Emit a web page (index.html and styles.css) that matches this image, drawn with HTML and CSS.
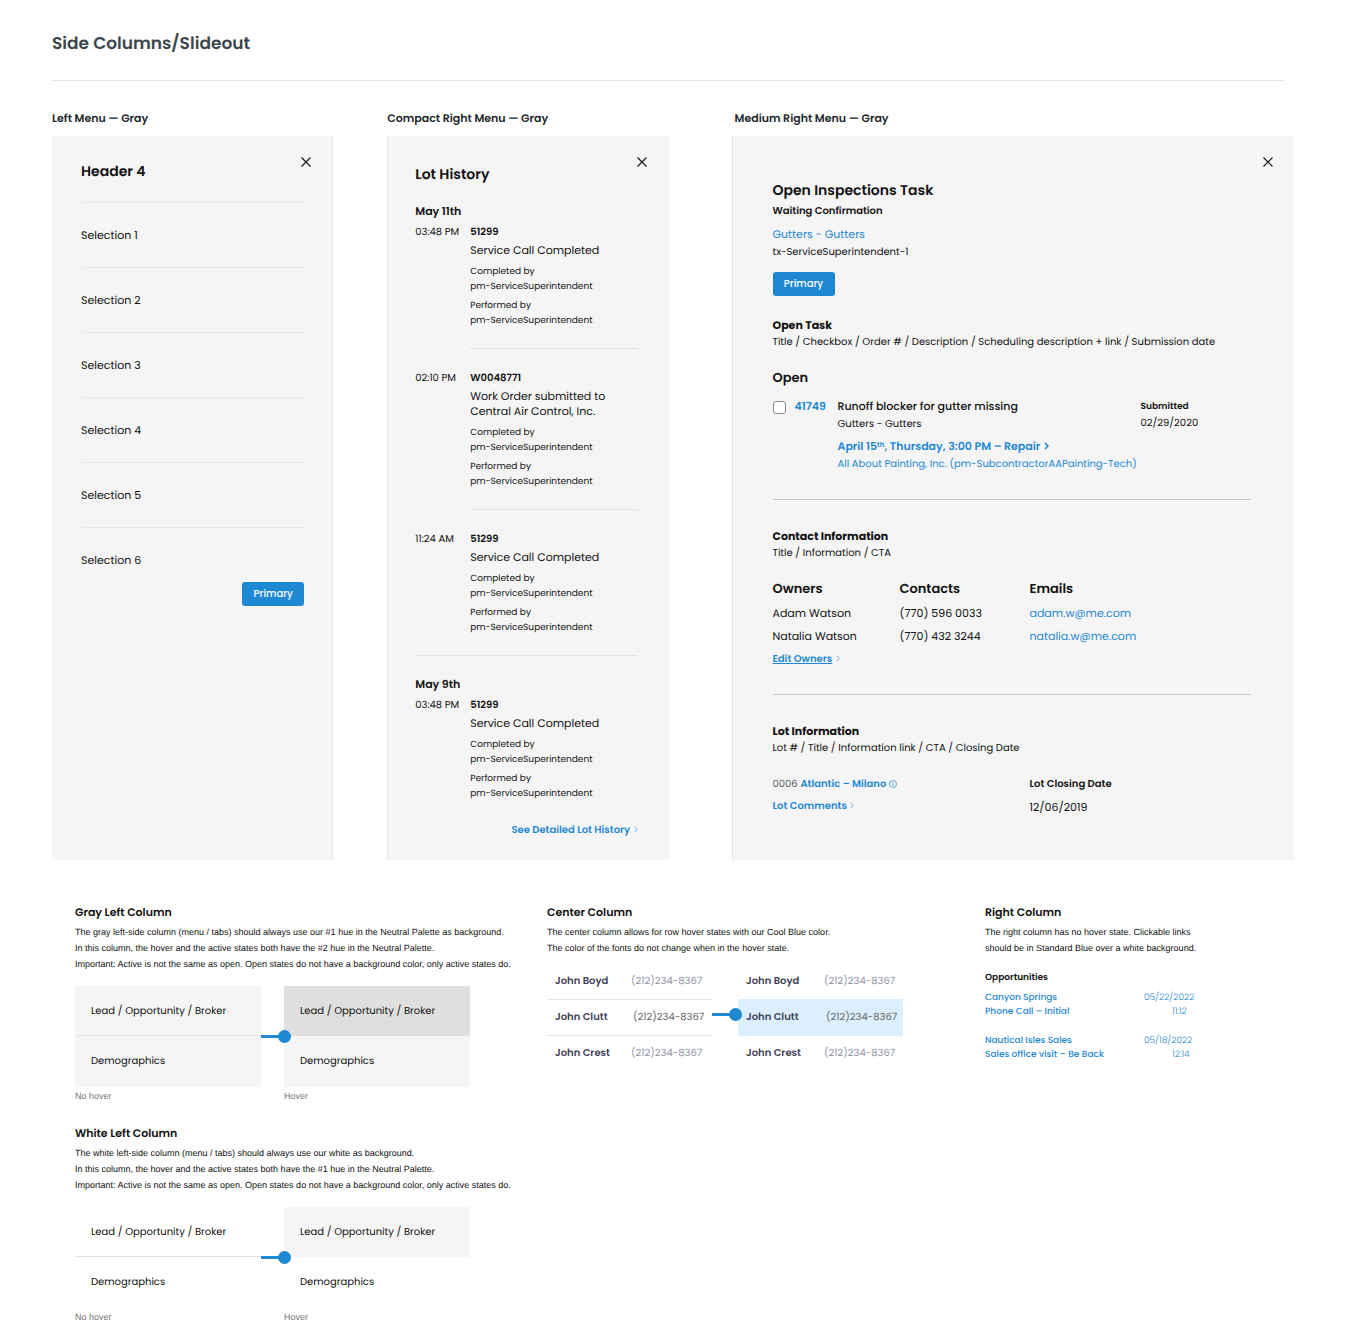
FILE: index.html
```html
<!DOCTYPE html>
<html lang="en">
<head>
    <meta charset="UTF-8">
    <meta name="viewport" content="width=device-width, initial-scale=1.0">
    <title>Side Columns/Slideout</title>
    <link rel="stylesheet" href="styles.css">
</head>
<body>
    <header class="page-header">
        <h1>Side Columns/Slideout</h1>
    </header>

    <main>
        <div class="panels">
            <!-- Left menu -->
            <section class="panel-col">
                <h2 class="panel-label">Left Menu — Gray</h2>
                <div class="panel panel-left">
                    <div class="panel-head">
                        <h3>Header 4</h3>
                        <button type="button" class="close" aria-label="Close">
                            <svg viewBox="0 0 12 12" width="12" height="12"><path d="M1.5 1.5l9 9M10.5 1.5l-9 9"/></svg>
                        </button>
                    </div>
                    <ul class="menu">
                        <li>Selection 1</li>
                        <li>Selection 2</li>
                        <li>Selection 3</li>
                        <li>Selection 4</li>
                        <li>Selection 5</li>
                        <li>Selection 6</li>
                    </ul>
                    <div class="actions">
                        <button type="button" class="btn">Primary</button>
                    </div>
                </div>
            </section>

            <!-- Compact right menu -->
            <section class="panel-col">
                <h2 class="panel-label">Compact Right Menu — Gray</h2>
                <div class="panel panel-compact">
                    <div class="panel-head">
                        <h3>Lot History</h3>
                        <button type="button" class="close" aria-label="Close">
                            <svg viewBox="0 0 12 12" width="12" height="12"><path d="M1.5 1.5l9 9M10.5 1.5l-9 9"/></svg>
                        </button>
                    </div>
                    <div class="day">
                        <h4>May 11th</h4>
                        <div class="entry">
                            <span class="time">03:48 PM</span>
                            <div class="entry-body">
                                <strong>51299</strong>
                                <p class="entry-title">Service Call Completed</p>
                                <p class="by">Completed by<br>pm-ServiceSuperintendent</p>
                                <p class="by">Performed by<br>pm-ServiceSuperintendent</p>
                            </div>
                        </div>
                        <div class="entry">
                            <span class="time">02:10 PM</span>
                            <div class="entry-body">
                                <strong>W0048771</strong>
                                <p class="entry-title">Work Order submitted to<br>Central Air Control, Inc.</p>
                                <p class="by">Completed by<br>pm-ServiceSuperintendent</p>
                                <p class="by">Performed by<br>pm-ServiceSuperintendent</p>
                            </div>
                        </div>
                        <div class="entry">
                            <span class="time">11:24 AM</span>
                            <div class="entry-body">
                                <strong>51299</strong>
                                <p class="entry-title">Service Call Completed</p>
                                <p class="by">Completed by<br>pm-ServiceSuperintendent</p>
                                <p class="by">Performed by<br>pm-ServiceSuperintendent</p>
                            </div>
                        </div>
                    </div>
                    <div class="day">
                        <h4>May 9th</h4>
                        <div class="entry">
                            <span class="time">03:48 PM</span>
                            <div class="entry-body">
                                <strong>51299</strong>
                                <p class="entry-title">Service Call Completed</p>
                                <p class="by">Completed by<br>pm-ServiceSuperintendent</p>
                                <p class="by">Performed by<br>pm-ServiceSuperintendent</p>
                            </div>
                        </div>
                    </div>
                    <p class="see-more">
                        <a href="#" class="link-strong">See Detailed Lot History <svg class="chevron" viewBox="0 0 4 7" width="4" height="7"><path d="M.7 .7l2.6 2.8L.7 6.3"/></svg></a>
                    </p>
                </div>
            </section>

            <!-- Medium right menu -->
            <section class="panel-col panel-col-wide">
                <h2 class="panel-label">Medium Right Menu — Gray</h2>
                <div class="panel panel-medium">
                    <div class="panel-head">
                        <h3>Open Inspections Task</h3>
                        <button type="button" class="close" aria-label="Close">
                            <svg viewBox="0 0 12 12" width="12" height="12"><path d="M1.5 1.5l9 9M10.5 1.5l-9 9"/></svg>
                        </button>
                    </div>
                    <div class="task-summary">
                        <strong>Waiting Confirmation</strong>
                        <a href="#" class="link">Gutters - Gutters</a>
                        <span class="assignee">tx-ServiceSuperintendent-1</span>
                        <button type="button" class="btn">Primary</button>
                    </div>

                    <div class="block">
                        <h4>Open Task</h4>
                        <p class="desc">Title / Checkbox / Order # / Description / Scheduling description + link / Submission date</p>
                        <h5>Open</h5>
                        <div class="task">
                            <input type="checkbox" id="task-41749">
                            <label for="task-41749" class="order">41749</label>
                            <div class="task-body">
                                <p class="task-title">Runoff blocker for gutter missing</p>
                                <p class="task-sub">Gutters - Gutters</p>
                                <a href="#" class="schedule">April 15<sup>th</sup>, Thursday, 3:00 PM – Repair <svg class="chevron chevron-bold" viewBox="0 0 5 8" width="5" height="8"><path d="M1 1l3 3-3 3"/></svg></a>
                                <a href="#" class="vendor">All About Painting, Inc. (pm-SubcontractorAAPainting-Tech)</a>
                            </div>
                            <div class="submitted">
                                <strong>Submitted</strong>
                                <span>02/29/2020</span>
                            </div>
                        </div>
                    </div>

                    <div class="block">
                        <h4>Contact Information</h4>
                        <p class="desc">Title / Information / CTA</p>
                        <table class="contacts">
                            <thead>
                                <tr><th>Owners</th><th>Contacts</th><th>Emails</th></tr>
                            </thead>
                            <tbody>
                                <tr><td>Adam Watson</td><td>(770) 596 0033</td><td><a href="#">adam.w@me.com</a></td></tr>
                                <tr><td>Natalia Watson</td><td>(770) 432 3244</td><td><a href="#">natalia.w@me.com</a></td></tr>
                            </tbody>
                        </table>
                        <a href="#" class="link-strong edit"><u>Edit Owners</u> <svg class="chevron" viewBox="0 0 4 7" width="4" height="7"><path d="M.7 .7l2.6 2.8L.7 6.3"/></svg></a>
                    </div>

                    <div class="block">
                        <h4>Lot Information</h4>
                        <p class="desc">Lot # / Title / Information link / CTA / Closing Date</p>
                        <div class="lot">
                            <div>
                                <p class="lot-name">0006 <a href="#" class="link-strong">Atlantic – Milano <svg class="info" viewBox="0 0 8 8" width="8" height="8"><circle cx="4" cy="4" r="3.5"/><path d="M4 1.8v.8M4 3.4v2.6"/></svg></a></p>
                                <a href="#" class="link-strong">Lot Comments <svg class="chevron" viewBox="0 0 4 7" width="4" height="7"><path d="M.7 .7l2.6 2.8L.7 6.3"/></svg></a>
                            </div>
                            <div>
                                <strong>Lot Closing Date</strong>
                                <p class="lot-date">12/06/2019</p>
                            </div>
                        </div>
                    </div>
                </div>
            </section>
        </div>

        <div class="columns">
            <div class="column-stack">
                <section class="column">
                    <h3>Gray Left Column</h3>
                    <p>The gray left-side column (menu / tabs) should always use our #1 hue in the Neutral Palette as background.</p>
                    <p>In this column, the hover and the active states both have the #2 hue in the Neutral Palette.</p>
                    <p>Important: Active is not the same as open. Open states do not have a background color, only active states do.</p>
                    <div class="states gray">
                        <div class="tabs">
                            <div class="tab">Lead / Opportunity / Broker</div>
                            <div class="tab">Demographics</div>
                        </div>
                        <span class="connector"></span>
                        <div class="tabs tabs-hover">
                            <div class="tab">Lead / Opportunity / Broker</div>
                            <div class="tab">Demographics</div>
                        </div>
                    </div>
                    <div class="captions"><span>No hover</span><span>Hover</span></div>
                </section>
                <section class="column">
                    <h3>White Left Column</h3>
                    <p>The white left-side column (menu / tabs) should always use our white as background.</p>
                    <p>In this column, the hover and the active states both have the #1 hue in the Neutral Palette.</p>
                    <p>Important: Active is not the same as open. Open states do not have a background color, only active states do.</p>
                    <div class="states white">
                        <div class="tabs">
                            <div class="tab">Lead / Opportunity / Broker</div>
                            <div class="tab">Demographics</div>
                        </div>
                        <span class="connector"></span>
                        <div class="tabs tabs-hover">
                            <div class="tab">Lead / Opportunity / Broker</div>
                            <div class="tab">Demographics</div>
                        </div>
                    </div>
                    <div class="captions"><span>No hover</span><span>Hover</span></div>
                </section>
            </div>

            <section class="column">
                <h3>Center Column</h3>
                <p>The center column allows for row hover states with our Cool Blue color.</p>
                <p>The color of the fonts do not change when in the hover state.</p>
                <div class="people-states">
                    <table class="people">
                        <tr><th>John Boyd</th><td>(212)234-8367</td></tr>
                        <tr class="current"><th>John Clutt</th><td>(212)234-8367</td></tr>
                        <tr><th>John Crest</th><td>(212)234-8367</td></tr>
                    </table>
                    <span class="connector"></span>
                    <table class="people people-hover">
                        <tr><th>John Boyd</th><td>(212)234-8367</td></tr>
                        <tr class="current"><th>John Clutt</th><td>(212)234-8367</td></tr>
                        <tr><th>John Crest</th><td>(212)234-8367</td></tr>
                    </table>
                </div>
            </section>

            <section class="column">
                <h3>Right Column</h3>
                <p>The right column has no hover state. Clickable links<br>should be in Standard Blue over a white background.</p>
                <h4>Opportunities</h4>
                <ul class="opportunities">
                    <li>
                        <a href="#">Canyon Springs<br>Phone Call – Initial</a>
                        <div><time>05/22/2022</time><time class="hour">11:12</time></div>
                    </li>
                    <li>
                        <a href="#">Nautical Isles Sales<br>Sales office visit – Be Back</a>
                        <div><time>05/18/2022</time><time class="hour">12:14</time></div>
                    </li>
                </ul>
            </section>
        </div>
    </main>
</body>
</html>
```
FILE: styles.css
```css
* {
    box-sizing: border-box;
}

body {
    font-family: 'Poppins', 'Inter', sans-serif;
    font-size: 11px;
    line-height: 16px;
    color: #111;
    background: #fff;
    text-rendering: geometricPrecision;
    margin: 0;
    padding: 31px 55px 18px 52px;
}

h1, h2, h3, h4, h5, p, ul {
    margin: 0;
    padding: 0;
}

ul {
    list-style: none;
}

strong, h1, h2, h3, h4, h5 {
    font-weight: 600;
}

a {
    color: #1e88d2;
    text-decoration: none;
}

button {
    font-family: inherit;
    border: none;
    cursor: pointer;
}

svg {
    fill: none;
    stroke: currentColor;
}

.page-header {
    border-bottom: 1px solid #e6e8e9;
    margin-right: 10px;
    padding-bottom: 25px;
}

.page-header h1 {
    font-size: 17px;
    line-height: 24px;
    color: #3d464b;
}

/* Panels */
.panels {
    display: flex;
    margin-top: 29px;
}

.panel-col {
    flex: 1 1 0;
    min-width: 0;
    display: flex;
    flex-direction: column;
}

.panel-col + .panel-col {
    margin-left: 54px;
}

.panel-col + .panel-col-wide {
    flex: 2 1 0;
    margin-left: 63px;
}

.panel-label {
    font-size: 11px;
    color: #22292d;
    margin-bottom: 10px;
}

.panel-col-wide .panel-label {
    padding-left: 3px;
}

.panel {
    flex: 1;
    background: #f5f5f5;
    border-left: 1px solid #e6e6e6;
    padding: 20px 31px 22px 27px;
}

.panel-left {
    border-left: none;
    border-right: 1px solid #e6e6e6;
    padding-left: 29px;
    padding-right: 28px;
}

.panel-medium {
    padding-left: 40px;
    padding-right: 43px;
}

.panel-head {
    display: flex;
    justify-content: space-between;
    align-items: flex-start;
}

.panel-head h3 {
    font-size: 14px;
    line-height: 24px;
    padding-top: 6px;
}

.panel-left h3 {
    padding-top: 3px;
}

.panel-medium h3 {
    padding-top: 22px;
}

.close {
    background: none;
    color: #111;
    padding: 0;
    width: 12px;
    height: 12px;
    line-height: 0;
    stroke-width: 1.1;
    margin-right: -10px;
}

.panel-left .close {
    margin-right: -8px;
}

.panel-medium .close {
    margin-right: -23px;
}

.btn {
    background: #1e88d2;
    color: #fff;
    border-radius: 3px;
    font-size: 10px;
    font-weight: 500;
    line-height: 16px;
    width: 62px;
    height: 24px;
    padding: 0;
}

.menu {
    margin-top: 19px;
}

.menu li {
    border-top: 1px solid #e8e8e8;
    padding: 24px 0;
}

.menu li:last-child {
    padding-bottom: 14px;
}

.actions {
    display: flex;
    justify-content: flex-end;
}

.link-strong {
    font-size: 10px;
    font-weight: 600;
}

.chevron {
    margin-left: 1px;
    stroke-width: 0.6;
}

.chevron-bold {
    stroke-width: 1.5;
}

/* Lot history */
.day {
    margin-top: 17px;
}

.day + .day {
    border-top: 1px solid #e2e2e2;
    margin-top: 19px;
    padding-top: 20px;
}

.day h4 {
    font-size: 11px;
    margin-bottom: 5px;
}

.entry {
    display: flex;
}

.time {
    flex: 0 0 55px;
    font-size: 10px;
}

.entry-body {
    flex: 1;
}

.entry + .entry {
    margin-top: 21px;
}

.entry:not(:last-child) .entry-body {
    border-bottom: 1px solid #e2e2e2;
    padding-bottom: 19px;
}

.entry strong {
    display: block;
    font-size: 10px;
}

.entry-title {
    line-height: 15px;
    margin: 3px 0 7px;
}

.by {
    font-size: 9px;
    line-height: 15px;
}

.by + .by {
    margin-top: 4px;
}

.see-more {
    margin-top: 19px;
    text-align: right;
}

/* Inspections task */
.task-summary {
    display: flex;
    flex-direction: column;
    align-items: flex-start;
}

.task-summary strong {
    font-size: 10px;
    margin: 1px 0 7px;
}

.assignee {
    font-size: 10px;
    margin: 2px 0 12px;
}

.block {
    margin-top: 21px;
}

.block + .block {
    border-top: 1px solid #c8c8c8;
    margin-top: 27px;
    padding-top: 28px;
}

.block h4 {
    font-size: 11px;
    font-weight: 700;
    margin-bottom: 1px;
}

.desc {
    font-size: 10px;
    margin-bottom: 20px;
}

.block h5 {
    font-size: 13px;
    margin-bottom: 12px;
}

.task {
    display: flex;
}

.task input {
    appearance: none;
    background: #fff;
    border: 1px solid #8a8a8a;
    border-radius: 3px;
    width: 13px;
    height: 13px;
    margin: 3px 9px 0 0;
}

.order {
    flex: 0 0 43px;
    color: #1e88d2;
    font-weight: 600;
}

.task-body {
    flex: 0 0 303px;
}

.task-body a {
    display: block;
}

.task-title {
    font-weight: 500;
    margin-bottom: 2px;
}

.task-sub, .task-body .vendor {
    font-size: 10px;
}

.task-body .schedule {
    font-weight: 600;
    margin: 6px 0 2px;
}

.schedule sup {
    font-size: 7px;
    line-height: 0;
    vertical-align: 3px;
}

.submitted {
    font-size: 10px;
    padding-top: 1px;
}

.submitted strong {
    display: block;
    font-size: 9px;
}

.contacts {
    width: 100%;
    table-layout: fixed;
    border-collapse: collapse;
}

.contacts th, .contacts td {
    text-align: left;
    line-height: 16px;
    padding: 7px 0 0;
}

.contacts th {
    font-size: 13px;
    font-weight: 600;
    padding: 0 0 1px;
}

.contacts th:first-child {
    width: 127px;
}

.contacts th:nth-child(2) {
    width: 130px;
}

.edit {
    display: inline-block;
    margin-top: 7px;
}

.lot {
    display: flex;
    font-size: 10px;
}

.lot > div:first-child {
    flex: 0 0 257px;
}

.lot-name {
    color: #555b66;
    margin-bottom: 6px;
}

.info {
    stroke-width: 0.7;
    vertical-align: -1px;
}

.lot-date {
    font-size: 11px;
    margin-top: 7px;
}

/* Column states */
.columns {
    display: grid;
    grid-template-columns: 472fr 438fr 309fr;
    margin-top: 44px;
    padding-left: 23px;
}

.column h3 {
    font-size: 11px;
    margin-bottom: 4px;
}

.column > p {
    font-family: Helvetica, 'Liberation Sans', sans-serif;
    font-size: 9px;
    white-space: nowrap;
}

.column-stack .column + .column {
    margin-top: 21px;
}

.states {
    display: flex;
    align-items: center;
    margin-top: 14px;
}

.tabs {
    width: 186px;
}

.tab {
    height: 51px;
    padding: 17px 16px;
    font-size: 10px;
}

.tab:first-child {
    border-bottom: 1px solid #e4e4e4;
    height: 50px;
}

.tabs-hover .tab:first-child {
    border-bottom: none;
}

.gray .tab {
    background: #f5f5f5;
}

.gray .tabs-hover .tab:first-child {
    background: #dfdfdf;
}

.white .tabs-hover .tab:first-child {
    background: #f5f5f5;
}

.connector {
    position: relative;
    flex: 0 0 23px;
    height: 3px;
    background: #1e88d2;
}

.connector::after {
    content: '';
    position: absolute;
    top: -5px;
    right: -7px;
    width: 13px;
    height: 13px;
    border-radius: 50%;
    background: #1e88d2;
}

.captions {
    display: flex;
    gap: 23px;
    font-family: Helvetica, 'Liberation Sans', sans-serif;
    font-size: 9px;
    color: #777;
    margin-top: 1px;
}

.captions span {
    width: 186px;
}

.people-states {
    display: flex;
    align-items: flex-start;
    margin-top: 7px;
}

.people {
    width: 165px;
    border-collapse: collapse;
}

.people th, .people td {
    font-size: 10px;
    line-height: 16px;
    text-align: left;
    height: 36px;
    padding: 0;
}

.people th {
    color: #3f4257;
    font-weight: 600;
    width: 84px;
    padding-left: 8px;
}

.people td {
    color: #9294a8;
}

.people .current td {
    color: #666;
    padding-left: 2px;
}

.people .current {
    border-top: 1px solid #e6e6e6;
    border-bottom: 1px solid #e6e6e6;
}

.people-hover {
    margin-left: 3px;
}

.people-hover th {
    width: 86px;
}

.people-hover .current {
    background: #dceffe;
    border-color: #dceffe;
}

.people-states .connector {
    margin-top: 50px;
}

.column h4 {
    font-size: 9px;
    margin: 14px 0 5px;
}

.opportunities {
    font-size: 9px;
    line-height: 14px;
}

.opportunities li {
    display: flex;
    margin-bottom: 15px;
}

.opportunities a {
    flex: 0 0 159px;
    font-weight: 500;
}

.opportunities time {
    display: block;
    color: #1e88d2;
    font-weight: 300;
}

.opportunities .hour {
    padding-left: 28px;
}
```
